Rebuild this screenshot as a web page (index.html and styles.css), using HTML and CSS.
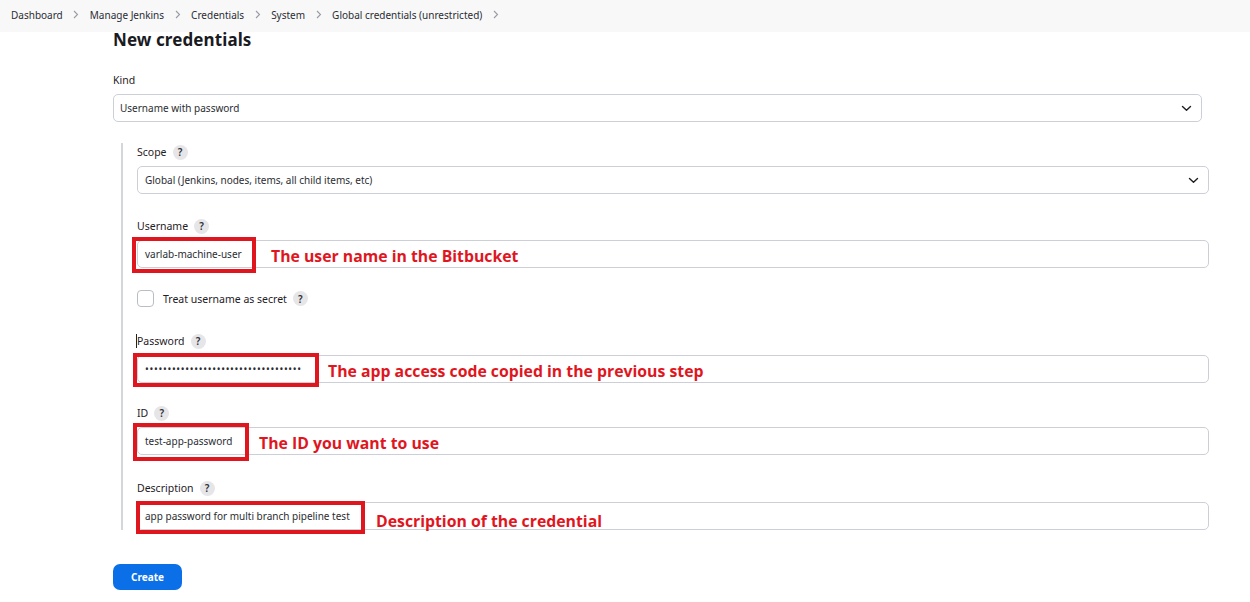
FILE: index.html
```html
<!DOCTYPE html>
<html lang="en">
<head>
<meta charset="utf-8">
<title>New credentials</title>
<link rel="stylesheet" href="styles.css">
</head>
<body>
<nav class="crumbs">
  <span class="crumb">Dashboard</span><span class="sep"><svg width="6" height="9" viewBox="0 0 6 9"><path d="M1 1l3.5 3.5L1 8" fill="none" stroke="#9a9ca3" stroke-width="1.1"/></svg></span>
  <span class="crumb">Manage Jenkins</span><span class="sep"><svg width="6" height="9" viewBox="0 0 6 9"><path d="M1 1l3.5 3.5L1 8" fill="none" stroke="#9a9ca3" stroke-width="1.1"/></svg></span>
  <span class="crumb">Credentials</span><span class="sep"><svg width="6" height="9" viewBox="0 0 6 9"><path d="M1 1l3.5 3.5L1 8" fill="none" stroke="#9a9ca3" stroke-width="1.1"/></svg></span>
  <span class="crumb">System</span><span class="sep"><svg width="6" height="9" viewBox="0 0 6 9"><path d="M1 1l3.5 3.5L1 8" fill="none" stroke="#9a9ca3" stroke-width="1.1"/></svg></span>
  <span class="crumb">Global credentials (unrestricted)</span><span class="sep"><svg width="6" height="9" viewBox="0 0 6 9"><path d="M1 1l3.5 3.5L1 8" fill="none" stroke="#9a9ca3" stroke-width="1.1"/></svg></span>
</nav>

<main class="page">
  <h1 class="title">New credentials</h1>

  <div class="field kind">
    <div class="label">Kind</div>
    <div class="select outer">
      <span class="select-text">Username with password</span>
      <svg class="chev" width="11" height="7" viewBox="0 0 11 7"><path d="M1.5 1.5l4 3.8 4-3.8" fill="none" stroke="#1d1f24" stroke-width="1.4" stroke-linecap="round" stroke-linejoin="round"/></svg>
    </div>
  </div>

  <section class="nested">
    <div class="field scope">
      <div class="label">Scope <span class="help">?</span></div>
      <div class="select">
        <span class="select-text">Global (Jenkins, nodes, items, all child items, etc)</span>
        <svg class="chev" width="11" height="7" viewBox="0 0 11 7"><path d="M1.5 1.5l4 3.8 4-3.8" fill="none" stroke="#1d1f24" stroke-width="1.4" stroke-linecap="round" stroke-linejoin="round"/></svg>
      </div>
    </div>

    <div class="field user">
      <div class="label">Username <span class="help">?</span></div>
      <div class="input">
        <span class="value">varlab-machine-user</span>
        <span class="mark mark-user"></span>
        <span class="note note-user">The user name in the Bitbucket</span>
      </div>
    </div>

    <div class="check-row">
      <span class="checkbox"></span>
      <span class="check-label">Treat username as secret</span>
      <span class="help">?</span>
    </div>

    <div class="field pw">
      <div class="label"><span class="caret"></span>Password <span class="help">?</span></div>
      <div class="input">
        <span class="value dots">•••••••••••••••••••••••••••••••••••</span>
        <span class="mark mark-pw"></span>
        <span class="note note-pw">The app access code copied in the previous step</span>
      </div>
    </div>

    <div class="field id">
      <div class="label">ID <span class="help">?</span></div>
      <div class="input">
        <span class="value">test-app-password</span>
        <span class="mark mark-id"></span>
        <span class="note note-id">The ID you want to use</span>
      </div>
    </div>

    <div class="field desc">
      <div class="label">Description <span class="help">?</span></div>
      <div class="input">
        <span class="value">app password for multi branch pipeline test</span>
        <span class="mark mark-desc"></span>
        <span class="note note-desc">Description of the credential</span>
      </div>
    </div>
  </section>

  <button class="create">Create</button>
</main>
</body>
</html>
```

FILE: styles.css
```css
* { box-sizing: border-box; }
html, body { margin: 0; padding: 0; background: #fff; }
body {
  font-family: "Noto Sans", "Open Sans", sans-serif;
  color: #1f2126;
  width: 1250px;
  height: 602px;
  overflow: hidden;
}

.crumbs {
  height: 32px;
  background: #f8f8f9;
  display: flex;
  align-items: center;
  padding-left: 11px;
  padding-bottom: 3px;
  font-size: 10px;
  color: #2b2d33;
}
.crumb { white-space: nowrap; }
.sep {
  width: 27px;
  display: flex;
  justify-content: center;
  align-items: center;
}

.page {
  margin-left: 113px;
  width: 1089px;
}

.title {
  margin: -2px 0 22px 0;
  font-size: 17px;
  font-weight: 700;
  line-height: 20px;
  height: 20px;
  color: #1a1b1f;
  letter-spacing: 0.1px;
}

.field { display: flex; flex-direction: column; }

.label {
  font-size: 10.5px;
  line-height: 16px;
  height: 16px;
  margin-bottom: 6px;
  display: flex;
  align-items: center;
  color: #1f2126;
  position: relative;
}
.help {
  display: inline-flex;
  align-items: center;
  justify-content: center;
  width: 15px;
  height: 15px;
  border-radius: 50%;
  background: #e6e6e9;
  color: #2f3136;
  font-size: 10px;
  font-weight: 600;
  line-height: 1;
  margin-left: 6px;
}

.select, .input {
  height: 28px;
  border: 1px solid #ccd0d6;
  border-radius: 5px;
  display: flex;
  align-items: center;
  font-size: 10px;
  color: #2b2d33;
  position: relative;
  background: #fff;
}
.select { padding-left: 6px; }
.input { padding-left: 7px; }
.nested .select { padding-left: 7px; }
.chev { position: absolute; right: 9px; top: 10px; }

.nested {
  margin-top: 21px;
  margin-left: 8px;
  width: 1088px;
  border-left: 2px solid #d3d6db;
  padding-left: 14px;
  padding-top: 1px;
}
.scope { margin-bottom: 24px; }
.user { margin-bottom: 22px; }
.pw { margin-bottom: 22px; }
.id { margin-bottom: 25px; }

.check-row {
  display: flex;
  align-items: center;
  height: 17px;
  margin-bottom: 26px;
}
.checkbox {
  width: 17px;
  height: 17px;
  border: 1px solid #b9bdc4;
  border-radius: 4px;
  margin-right: 9px;
}
.check-label { font-size: 10.5px; }

.caret {
  position: absolute;
  left: -1px;
  top: 1px;
  width: 1px;
  height: 14px;
  background: #222;
}

.dots { letter-spacing: 0.72px; font-size: 10px; }

.mark {
  position: absolute;
  border: 4px solid #e0161e;
  pointer-events: none;
}
.mark-user { left: -6px; top: -4px; width: 124px; height: 36px; }
.mark-pw { left: -5px; top: -3px; width: 186px; height: 34px; }
.mark-id { left: -5px; top: -5px; width: 116px; height: 38px; }
.mark-desc { left: -2px; top: -2px; width: 229px; height: 33px; }

.note {
  position: absolute;
  top: calc(50% + 2px);
  transform: translateY(-50%);
  color: #e0161e;
  font-weight: 700;
  font-size: 15.8px;
  white-space: nowrap;
  font-family: "Open Sans", "Noto Sans", sans-serif;
}
.note-user { left: 133px; }
.note-pw { left: 190px; }
.note-id { left: 121px; }
.note-desc { left: 238px; top: calc(50% + 5px); }

.create {
  margin-top: 34px;
  width: 69px;
  height: 26px;
  border: 0;
  border-radius: 7px;
  background: #0b6fe8;
  color: #fff;
  font-family: "Noto Sans", sans-serif;
  font-weight: 700;
  font-size: 10px;
  padding: 0;
  display: block;
}
```
